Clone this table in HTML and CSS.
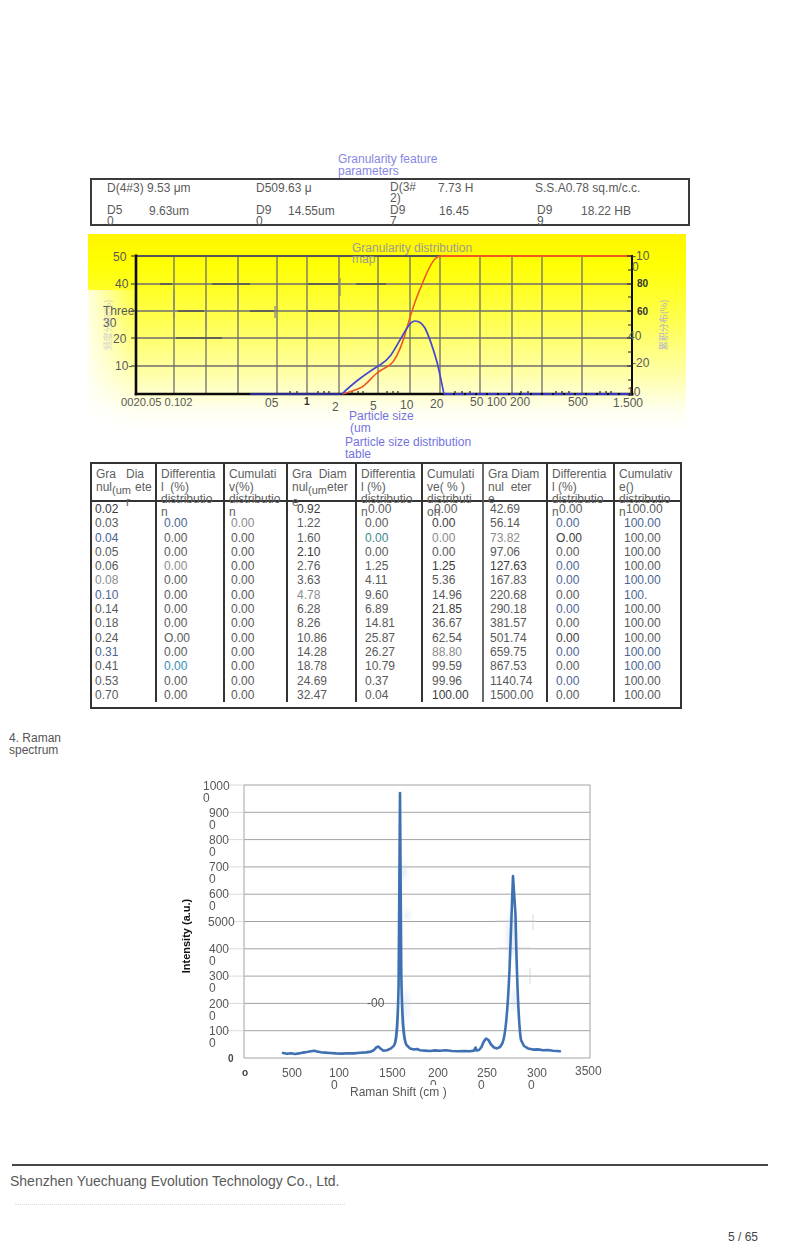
FILE: index.html
```html
<!DOCTYPE html>
<html lang="en">
<head>
<meta charset="utf-8">
<title>Test report – page 5</title>
<link rel="stylesheet" href="styles.css">
</head>
<body>
<div class="page">
  <div class="gf-title">Granularity feature parameters</div>

  <div class="params">
    <div class="pc">D(4#3) 9.53 μm</div>
    <div class="pc">D509.63 μ</div>
    <div class="pc"><span class="pl w48">D(3#<br>2)</span><span>7.73 H</span></div>
    <div class="pc">S.S.A0.78 sq.m/c.c.</div>
    <div class="pc"><span class="pl w42">D5<br>0</span><span>9.63um</span></div>
    <div class="pc"><span class="pl w32">D9<br>0</span><span>14.55um</span></div>
    <div class="pc"><span class="pl w49">D9<br>7</span><span>16.45</span></div>
    <div class="pc pc-shift"><span class="pl w44">D9<br>9</span><span>18.22 HB</span></div>
  </div>

  <div class="chart">
    <svg class="gchart" width="598" height="228" viewBox="88 234 598 228">
      <defs>
        <linearGradient id="yg" x1="0" y1="0" x2="0" y2="1">
          <stop offset="0" stop-color="#fff400"/>
          <stop offset="0.14" stop-color="#ffff00"/>
          <stop offset="0.45" stop-color="#ffff52"/>
          <stop offset="0.72" stop-color="#ffffaa"/>
          <stop offset="0.9" stop-color="#fffff0"/>
          <stop offset="1" stop-color="#ffffff"/>
        </linearGradient>
        <linearGradient id="lf" x1="0" y1="0" x2="1" y2="0">
          <stop offset="0" stop-color="#ffffff" stop-opacity="0.85"/>
          <stop offset="1" stop-color="#ffffff" stop-opacity="0"/>
        </linearGradient>
      </defs>
      <rect x="88" y="234" width="598" height="196" fill="url(#yg)"/>
      <rect x="88" y="290" width="52" height="140" fill="url(#lf)"/>

      <path class="grid" d="M174 256V394M206 256V394M238 256V394M277 256V394M307 256V394M339 256V394M378 256V394M410 256V394M440 256V394M480 256V394M512 256V394M542 256V394M582 256V394M136 284H631M136 311H631M136 338H631M136 366H631"/>
      <path class="smear" d="M160 284H172M212 284H250M178 311H204M250 311H275M308 284H338M308 311H338M356 284H386M176 338H222"/>
      <path class="smear-v" d="M174 290V318M206 311V330M340 278V296M275 306V318"/>

      <path class="topline" d="M136 256H440"/>
      <path class="topline-red" d="M440 256H632"/>
      <path class="axis" d="M136 254.5V395.5M134.5 394H633.5"/>
      <path class="axis-r" d="M632 255V395"/>
      <path class="ticks" d="M131 256H136M131 284H136M131 311H136M131 338H136M131 366H136M627 256H632M628 270H632M627 284H632M628 297H632M627 311H632M628 325H632M627 338H632M628 352H632M627 366H632M628 380H632M290 391V394M297 391V394M318 391V394M324 391V394M329 391V394M352 391V394M358 391V394M363 391V394M387 391V394M393 391V394M398 391V394M455 391V394M462 391V394M470 391V394M521 391V394M528 391V394M556 391V394M562 391V394M569 391V394M600 391V394M606 391V394M611 391V394"/>
      <path class="blue-base" d="M250 394H341"/>
      <path class="blue-dash" d="M444 394H631"/>

      <path class="curve-red" d="M342 394 C350 392 356 390 362 387 C368 383 372 377 377 373 C381 370 385 368 390 365 C396 360 400 350 404 338 C409 320 415 300 421 287 C426 274 431 262 436 258 C438 256.5 439 256 441 256"/>
      <path class="curve-blue" d="M342 394 C348 388 353 384 358 380 C366 374 373 369 380 365 C385 362 388 359 391 355 C397 346 402 336 407 328 C410 323 412 321 415 321 C419 321 422 323 425 328 C429 336 433 348 437 362 C440 374 442 385 444 394"/>

      <text class="gt-title" x="352" y="252">Granularity distribution</text>
      <text class="gt-title" x="352" y="263">map</text>

      <text class="tl" x="113" y="261">50</text>
      <text class="tl" x="115" y="288">40</text>
      <text class="tl" x="103" y="315">Three</text>
      <text class="tl" x="103" y="327">30</text>
      <text class="tl" x="113" y="343">20</text>
      <text class="tl" x="115" y="370">10-</text>
      <text class="faint-cjk" transform="translate(111 325) rotate(-90)" text-anchor="middle">频度分布(%)</text>

      <text class="tl t11" x="121" y="406">0020.05 0.102</text>
      <text class="tl" x="265" y="407">05</text>
      <text class="tl tb" x="304" y="405">1</text>
      <text class="tl" x="332" y="411">2</text>
      <text class="tl" x="370" y="410">5</text>
      <text class="tl" x="400" y="409">10</text>
      <text class="tl" x="430" y="408">20</text>
      <text class="tl" x="470" y="406">50 100 200</text>
      <text class="tl" x="568" y="406">500</text>
      <text class="tl" x="613" y="407">1.500</text>

      <text class="tl" x="632" y="260">-10</text>
      <text class="tl" x="632" y="271">0</text>
      <text class="tl tb" x="637" y="287">80</text>
      <text class="tl tb" x="637" y="315">60</text>
      <text class="tl" x="628" y="340">40</text>
      <text class="tl" x="632" y="367">-20</text>
      <text class="tl" x="627" y="396">10</text>
      <text class="faint-cjk r" transform="translate(667 325) rotate(-90)" text-anchor="middle">累积分布(%)</text>

      <text class="cap" x="349" y="420">Particle size</text>
      <text class="cap" x="350" y="432">(um</text>
      <text class="cap" x="345" y="446">Particle size distribution</text>
      <text class="cap" x="345" y="458">table</text>
    </svg>
  </div>

  <div class="ptable">
    <div class="th">Gra&nbsp;&nbsp;&nbsp;Dia<br>nul<span class="lo">(um</span><span class="gap">ete</span><br><span class="ind">r</span></div>
    <div class="th">Differentia<br>l&nbsp;&nbsp;(%)<br>distributio<br>n</div>
    <div class="th">Cumulati<br>v(%)<br>distributio<br>n</div>
    <div class="th">Gra&nbsp;&nbsp;Diam<br>nul<span class="lo">(um</span>eter<br>e</div>
    <div class="th">Differentia<br>l (%)<br>distributio<br>n</div>
    <div class="th">Cumulati<br>ve( % )<br>distributi<br>on</div>
    <div class="th">Gra Diam<br>nul&nbsp;&nbsp;eter<br>e</div>
    <div class="th">Differentia<br>l (%)<br>distributio<br>n</div>
    <div class="th">Cumulativ<br>e()<br>distributio<br>n</div>

    <div class="td d">0.02</div><div class="td"></div><div class="td"></div><div class="td d">0.92</div><div class="td f">0.00</div><div class="td f">0.00</div><div class="td">42.69</div><div class="td f">0.00</div><div class="td f">100.00</div>
    <div class="td">0.03</div><div class="td b">0.00</div><div class="td l">0.00</div><div class="td">1.22</div><div class="td">0.00</div><div class="td d">0.00</div><div class="td">56.14</div><div class="td b">0.00</div><div class="td b">100.00</div>
    <div class="td b">0.04</div><div class="td">0.00</div><div class="td">0.00</div><div class="td">1.60</div><div class="td g">0.00</div><div class="td l">0.00</div><div class="td l">73.82</div><div class="td d">O.00</div><div class="td">100.00</div>
    <div class="td">0.05</div><div class="td">0.00</div><div class="td">0.00</div><div class="td d">2.10</div><div class="td">0.00</div><div class="td">0.00</div><div class="td">97.06</div><div class="td">0.00</div><div class="td">100.00</div>
    <div class="td">0.06</div><div class="td l">0.00</div><div class="td">0.00</div><div class="td">2.76</div><div class="td">1.25</div><div class="td d">1.25</div><div class="td d">127.63</div><div class="td b">0.00</div><div class="td">100.00</div>
    <div class="td l">0.08</div><div class="td">0.00</div><div class="td">0.00</div><div class="td">3.63</div><div class="td">4.11</div><div class="td">5.36</div><div class="td">167.83</div><div class="td b">0.00</div><div class="td b">100.00</div>
    <div class="td b">0.10</div><div class="td">0.00</div><div class="td">0.00</div><div class="td l">4.78</div><div class="td">9.60</div><div class="td">14.96</div><div class="td">220.68</div><div class="td">0.00</div><div class="td b">100.</div>
    <div class="td">0.14</div><div class="td">0.00</div><div class="td">0.00</div><div class="td">6.28</div><div class="td">6.89</div><div class="td d">21.85</div><div class="td">290.18</div><div class="td b">0.00</div><div class="td">100.00</div>
    <div class="td">0.18</div><div class="td">0.00</div><div class="td">0.00</div><div class="td">8.26</div><div class="td">14.81</div><div class="td">36.67</div><div class="td">381.57</div><div class="td">0.00</div><div class="td">100.00</div>
    <div class="td">0.24</div><div class="td">O.00</div><div class="td">0.00</div><div class="td">10.86</div><div class="td">25.87</div><div class="td">62.54</div><div class="td">501.74</div><div class="td d">0.00</div><div class="td">100.00</div>
    <div class="td b">0.31</div><div class="td">0.00</div><div class="td">0.00</div><div class="td">14.28</div><div class="td">26.27</div><div class="td l">88.80</div><div class="td">659.75</div><div class="td b">0.00</div><div class="td b">100.00</div>
    <div class="td">0.41</div><div class="td c">0.00</div><div class="td">0.00</div><div class="td">18.78</div><div class="td">10.79</div><div class="td">99.59</div><div class="td">867.53</div><div class="td">0.00</div><div class="td b">100.00</div>
    <div class="td">0.53</div><div class="td">0.00</div><div class="td">0.00</div><div class="td">24.69</div><div class="td">0.37</div><div class="td">99.96</div><div class="td">1140.74</div><div class="td b">0.00</div><div class="td">100.00</div>
    <div class="td">0.70</div><div class="td">0.00</div><div class="td">0.00</div><div class="td">32.47</div><div class="td">0.04</div><div class="td d">100.00</div><div class="td">1500.00</div><div class="td">0.00</div><div class="td">100.00</div>
  </div>

  <div class="raman-title">4. Raman spectrum</div>

  <div class="raman">
    <svg class="rchart" width="440" height="335" viewBox="170 770 440 335">
      <defs>
        <filter id="blur" x="-50%" y="-50%" width="200%" height="200%">
          <feGaussianBlur stdDeviation="2.5"/>
        </filter>
      </defs>
      <path class="rgrid" d="M244 785H590M244 812.3H590M244 839.6H590M244 866.9H590M244 894.2H590M244 921.5H590M244 948.8H590M244 976.1H590M244 1003.4H590M244 1030.7H590M244 1058H590M244 785V1058M590 785V1058"/>
      <path class="rdash" d="M229 785H244M227 812.3H244M227 839.6H244M227 866.9H244M227 894.2H244M234 921.5H244M227 948.8H244M227 976.1H244M227 1003.4H244M227 1030.7H244"/>
      <path class="rfaint" d="M495 921H535M498 948H530M500 976H528M533 914V930M530 968V984"/>

      <g class="haze" filter="url(#blur)">
        <ellipse cx="403" cy="872" rx="4" ry="8"/>
        <ellipse cx="407" cy="915" rx="3" ry="6"/>
        <ellipse cx="406" cy="1005" rx="3" ry="16"/>
        <ellipse cx="512" cy="935" rx="6" ry="22"/>
        <ellipse cx="514" cy="1000" rx="3" ry="12"/>
      </g>

      <path class="spectrum" d="M283 1053 L287 1053.8 L291 1053.2 L295 1054 L299 1053.4 L303 1052.6 L307 1052 L311 1051.2 L314 1050.8 L317 1051.4 L321 1052.2 L325 1052.6 L330 1053 L336 1053.4 L342 1053.6 L348 1053.2 L354 1053.4 L360 1052.8 L366 1052.4 L371 1051.6 L374 1050 L376.5 1047.2 L378.5 1046.6 L380.5 1048.6 L383 1050.6 L387 1050.2 L391 1048.4 L394 1045.6 C396.5 1042 397.6 1030 398.6 985 L400 793 L401.3 975 C402.2 1025 403.6 1040 406.5 1045 L410 1048.4 L414 1049.6 L417 1049 L420 1050.2 L425 1050.6 L430 1051 L435 1050.4 L440 1050.8 L446 1050.2 L452 1051 L458 1051.2 L464 1051 L470 1051.2 L474 1050.6 L475.5 1047.5 L476.5 1050.5 L479 1050 L481.5 1047 L483.5 1042 L486 1038.5 L488.5 1040 L491 1044.5 L494 1047.5 L497 1048.4 L500 1047 L502.5 1043 C505.5 1036 507.5 1015 509.5 970 L513 876 L515.5 915 C517 985 518.5 1025 521 1040 L524 1046 L528 1048.4 L533 1049.6 L538 1049.4 L543 1050.2 L548 1050 L553 1050.8 L560 1051.2"/>

      <text class="rl" x="203" y="790">1000</text><text class="rl" x="203" y="802">0</text>
      <text class="rl" x="209" y="817">900</text><text class="rl" x="209" y="829">0</text>
      <text class="rl" x="209" y="844">800</text><text class="rl" x="209" y="856">0</text>
      <text class="rl" x="209" y="871">700</text><text class="rl" x="209" y="883">0</text>
      <text class="rl" x="209" y="898">600</text><text class="rl" x="209" y="910">0</text>
      <text class="rl" x="208" y="926">5000</text>
      <text class="rl" x="209" y="953">400</text><text class="rl" x="209" y="965">0</text>
      <text class="rl" x="209" y="980">300</text><text class="rl" x="209" y="992">0</text>
      <text class="rl" x="209" y="1008">200</text><text class="rl" x="209" y="1020">0</text>
      <text class="rl" x="209" y="1035">100</text><text class="rl" x="209" y="1047">0</text>
      <text class="rl rb" x="228" y="1062">0</text>

      <text class="rl rb" x="242" y="1076">o</text>
      <text class="rl" x="282" y="1077">500</text>
      <text class="rl" x="329" y="1077">100</text><text class="rl" x="331" y="1089">0</text>
      <text class="rl" x="379" y="1077">1500</text>
      <text class="rl" x="428" y="1077">200</text><text class="rl" x="430" y="1089">0</text>
      <text class="rl" x="477" y="1077">250</text><text class="rl" x="478" y="1089">0</text>
      <text class="rl" x="527" y="1077">300</text><text class="rl" x="528" y="1089">0</text>
      <text class="rl" x="575" y="1075">3500</text>

      <rect class="mask" x="346" y="1085" width="104" height="16"/>
      <text class="rl" x="350" y="1096">Raman Shift (cm )</text>
      <text class="rl" x="367" y="1007">-00</text>
      <text class="ytitle" transform="translate(189.5 936) rotate(-90)" text-anchor="middle">Intensity (a.u.)</text>
    </svg>
  </div>

  <div class="rule"></div>
  <div class="company">Shenzhen Yuechuang Evolution Technology Co., Ltd.</div>
  <div class="dots"></div>
  <div class="pageno">5 / 65</div>
</div>
</body>
</html>
```

FILE: styles.css
```css
* { box-sizing: border-box; }

html, body {
  margin: 0;
  padding: 0;
  background: #ffffff;
}

body {
  width: 800px;
  font-family: "Liberation Sans", Arial, sans-serif;
  color: #555555;
}

.page {
  padding-top: 153px;
}

/* ---------- granularity feature parameters ---------- */
.gf-title {
  margin-left: 338px;
  width: 104px;
  font-size: 12px;
  line-height: 12px;
  color: #8787e3;
}

.params {
  margin: 1px 0 0 90px;
  width: 600px;
  height: 48px;
  border: 2px solid #3b3b3b;
  padding: 2px 0 0 15px;
  display: grid;
  grid-template-columns: 149px 134px 145px 1fr;
  grid-template-rows: 23px 22px;
  font-size: 12px;
  line-height: 12px;
  color: #5a5a5a;
}

.pc {
  display: flex;
  white-space: nowrap;
}

.pc-shift { padding-left: 2px; }

.pl {
  display: inline-block;
  line-height: 10.5px;
}

.w32 { width: 32px; }
.w42 { width: 42px; }
.w44 { width: 44px; }
.w48 { width: 48px; }
.w49 { width: 49px; }

/* ---------- granularity distribution chart ---------- */
.chart {
  margin: 8px 0 0 88px;
  width: 598px;
  height: 228px;
}

.chart svg,
.raman svg {
  display: block;
}

svg text {
  font-family: "Liberation Sans", Arial, sans-serif;
}

.grid {
  fill: none;
  stroke: #6f6f6f;
  stroke-width: 1.3;
}

.smear {
  fill: none;
  stroke: #555555;
  stroke-width: 2.2;
  opacity: 0.8;
}

.smear-v {
  fill: none;
  stroke: #8a8a8a;
  stroke-width: 1.6;
  opacity: 0.8;
}

.topline {
  fill: none;
  stroke: #555555;
  stroke-width: 2;
}

.topline-red {
  fill: none;
  stroke: #ee5a22;
  stroke-width: 2.2;
}

.axis {
  fill: none;
  stroke: #0a0a0a;
  stroke-width: 2.6;
}

.axis-r {
  fill: none;
  stroke: #0a0a0a;
  stroke-width: 2;
}

.ticks {
  fill: none;
  stroke: #222222;
  stroke-width: 1.2;
}

.blue-base {
  fill: none;
  stroke: #3434c8;
  stroke-width: 1.6;
}

.blue-dash {
  fill: none;
  stroke: #3636c8;
  stroke-width: 2;
  stroke-dasharray: 9 2;
}

.curve-red {
  fill: none;
  stroke: #ee5522;
  stroke-width: 1.6;
}

.curve-blue {
  fill: none;
  stroke: #4646d2;
  stroke-width: 1.7;
}

.gt-title {
  font-size: 12px;
  fill: #9c9c94;
}

.tl {
  font-size: 12px;
  fill: #585858;
}

.t11 { font-size: 11.2px; }

.tb {
  font-size: 10px;
  font-weight: bold;
  fill: #333333;
}

.faint-cjk {
  font-family: "Noto Sans CJK SC", "Liberation Sans", sans-serif;
  font-size: 9px;
  fill: #a5a5dc;
  opacity: 0.5;
}

.faint-cjk.r { opacity: 0.85; }

.cap {
  font-size: 12px;
  fill: #7272e0;
}

/* ---------- particle size distribution table ---------- */
.ptable {
  margin-left: 90px;
  width: 592px;
  display: grid;
  grid-template-columns: 65px 68px 63px 69px 66px 61px 64px 67px 65px;
  grid-template-rows: 38px repeat(14, 14.3px);
  border: 2px solid #333333;
  padding-bottom: 5px;
  font-size: 12px;
  color: #5a5a5a;
}

.ptable > div {
  white-space: nowrap;
}

.ptable > div:not(:nth-child(9n)) {
  border-right: 2px solid #333333;
}

.ptable > div:nth-child(9n+6) {
  border-right-color: #6a6a6a;
}

.th {
  padding: 4px 0 0 4px;
  line-height: 12.5px;
  border-bottom: 2px solid #333333;
  color: #5e5e5e;
}

.th .lo {
  font-size: 11px;
  vertical-align: -3px;
}

.th .gap { margin-left: 4px; }

.th .ind {
  display: inline-block;
  margin-left: 30px;
}

.td {
  line-height: 14.3px;
}

.td:nth-child(9n+1) { padding-left: 3px; }
.td:nth-child(9n+2) { padding-left: 7px; }
.td:nth-child(9n+3) { padding-left: 6px; }
.td:nth-child(9n+4) { padding-left: 9px; }
.td:nth-child(9n+5) { padding-left: 8px; }
.td:nth-child(9n+6) { padding-left: 9px; }
.td:nth-child(9n+7) { padding-left: 6px; }
.td:nth-child(9n+8) { padding-left: 8px; }
.td:nth-child(9n)   { padding-left: 9px; }

.td.f { padding-left: 11px; }

.td.b { color: #4b6592; }
.td.c { color: #3b8cb8; }
.td.g { color: #3f8a8a; }
.td.l { color: #8c8c8c; }
.td.d { color: #3c3c3c; }

/* ---------- raman spectrum ---------- */
.raman-title {
  margin: 23px 0 0 9px;
  width: 56px;
  font-size: 12px;
  line-height: 12px;
  color: #555555;
}

.raman {
  margin: 14px 0 0 170px;
  width: 440px;
  height: 335px;
}

.rgrid {
  fill: none;
  stroke: #a3a3a3;
  stroke-width: 1;
}

.rdash {
  fill: none;
  stroke: #dadada;
  stroke-width: 1;
}

.rfaint {
  fill: none;
  stroke: #c8c8c8;
  stroke-width: 1;
  opacity: 0.7;
}

.haze ellipse {
  fill: #c4d5ee;
  opacity: 0.4;
}

.spectrum {
  fill: none;
  stroke: #3e70b2;
  stroke-width: 2.6;
  stroke-linejoin: round;
  stroke-linecap: round;
}

.rl {
  font-size: 12px;
  fill: #575757;
}

.rb {
  font-size: 10px;
  font-weight: bold;
  fill: #444444;
}

.mask { fill: #ffffff; }

.ytitle {
  font-size: 11px;
  font-weight: bold;
  fill: #111111;
}

/* ---------- footer ---------- */
.rule {
  margin: 59px 0 0 12px;
  width: 756px;
  border-top: 2px solid #474747;
}

.company {
  margin: 7px 0 0 10px;
  font-size: 14px;
  line-height: 17px;
  color: #5a5a5a;
}

.dots {
  margin: 14px 0 0 15px;
  width: 330px;
  border-top: 1px dotted #dcdcdc;
}

.pageno {
  margin-top: 25px;
  padding-right: 42px;
  text-align: right;
  font-size: 12px;
  line-height: 14px;
  color: #444444;
}
```
